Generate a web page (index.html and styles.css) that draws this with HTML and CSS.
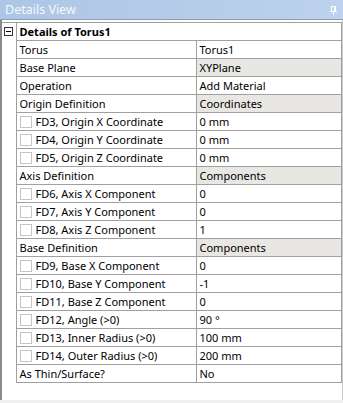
FILE: index.html
```
<!DOCTYPE html>
<html lang="en">
<head>
  <meta charset="UTF-8" />
  <title>Details View</title>
  <link rel="stylesheet" href="styles.css">
</head>
<body>

  <div class="panel">
    <div class="titlebar">
      <span class="title">Details View</span>
      <svg class="pin" width="7" height="9" viewBox="0 0 7 9">
        <path d="M1 0.5H6M1.5 0.5V5M4.5 0.5V5M5.5 0.5V5M0 5.5H7M3.5 5.5V9" stroke="#fff" stroke-width="1" fill="none"/>
      </svg>
    </div>

    <div class="body">
      <table class="details">
        <colgroup>
          <col class="col-expander">
          <col class="col-name">
          <col class="col-value">
        </colgroup>
        <tr class="head">
          <td class="expander" rowspan="20"><span class="minus"></span></td>
          <td colspan="2" class="group">Details of Torus1</td>
        </tr>
        <tr><td>Torus</td><td>Torus1</td></tr>
        <tr><td>Base Plane</td><td class="shaded">XYPlane</td></tr>
        <tr><td>Operation</td><td>Add Material</td></tr>
        <tr><td>Origin Definition</td><td class="shaded">Coordinates</td></tr>
        <tr><td><span class="check"></span>FD3, Origin X Coordinate</td><td>0 mm</td></tr>
        <tr><td><span class="check"></span>FD4, Origin Y Coordinate</td><td>0 mm</td></tr>
        <tr><td><span class="check"></span>FD5, Origin Z Coordinate</td><td>0 mm</td></tr>
        <tr><td>Axis Definition</td><td class="shaded">Components</td></tr>
        <tr><td><span class="check"></span>FD6, Axis X Component</td><td>0</td></tr>
        <tr><td><span class="check"></span>FD7, Axis Y Component</td><td>0</td></tr>
        <tr><td><span class="check"></span>FD8, Axis Z Component</td><td>1</td></tr>
        <tr><td>Base Definition</td><td class="shaded">Components</td></tr>
        <tr><td><span class="check"></span>FD9, Base X Component</td><td>0</td></tr>
        <tr><td><span class="check"></span>FD10, Base Y Component</td><td>-1</td></tr>
        <tr><td><span class="check"></span>FD11, Base Z Component</td><td>0</td></tr>
        <tr><td><span class="check"></span>FD12, Angle (&gt;0)</td><td>90 °</td></tr>
        <tr><td><span class="check"></span>FD13, Inner Radius (&gt;0)</td><td>100 mm</td></tr>
        <tr><td><span class="check"></span>FD14, Outer Radius (&gt;0)</td><td>200 mm</td></tr>
        <tr><td>As Thin/Surface?</td><td>No</td></tr>
      </table>
    </div>
  </div>

</body>
</html>
```

FILE: styles.css
```
body {
  margin: 0;
  background: #f0f0f0;
  font-family: "Noto Sans", "DejaVu Sans", sans-serif;
  font-size: 11px;
  color: #000;
}

.panel {
  width: 343px;
  height: 403px;
}

.titlebar {
  height: 19px;
  background: linear-gradient(to right, #adc6e5, #bcd2ed);
  border-bottom: 1px solid #8c9db2;
  display: flex;
  align-items: center;
  justify-content: space-between;
  padding: 0 6px 0 5px;
}

.title {
  color: #f4f8fc;
  font-size: 12.5px;
}

.pin {
  display: block;
  margin-top: 2px;
}

.body {
  height: 378px;
  background: #fff;
  border-left: 2px solid #8a8a8a;
  border-right: 1px solid #c9c9c9;
  padding-top: 2px;
}

.details {
  border-collapse: collapse;
  table-layout: fixed;
  width: 340px;
}

.col-expander {
  width: 14px;
}

.col-name {
  width: 180px;
}

.details td {
  height: 17px;
  padding: 0 0 0 3px;
  border: 1px solid #a0a0a0;
  white-space: nowrap;
  overflow: hidden;
  line-height: 17px;
}

.details td.expander {
  padding: 0;
  vertical-align: top;
  border-left: none;
  border-bottom: none;
}

.minus {
  display: block;
  position: relative;
  width: 7px;
  height: 7px;
  margin: 4px 0 0 2px;
  border: 1px solid #333;
  background: #fff;
}

.minus::after {
  content: "";
  position: absolute;
  left: 1px;
  top: 3px;
  width: 5px;
  height: 1px;
  background: #000;
}

.group {
  font-weight: bold;
}

.details td.shaded {
  background: #e8e7e3;
}

.check {
  display: inline-block;
  width: 10px;
  height: 10px;
  border: 1px solid #c4c4c4;
  vertical-align: -2px;
  margin-right: 4px;
}
```
